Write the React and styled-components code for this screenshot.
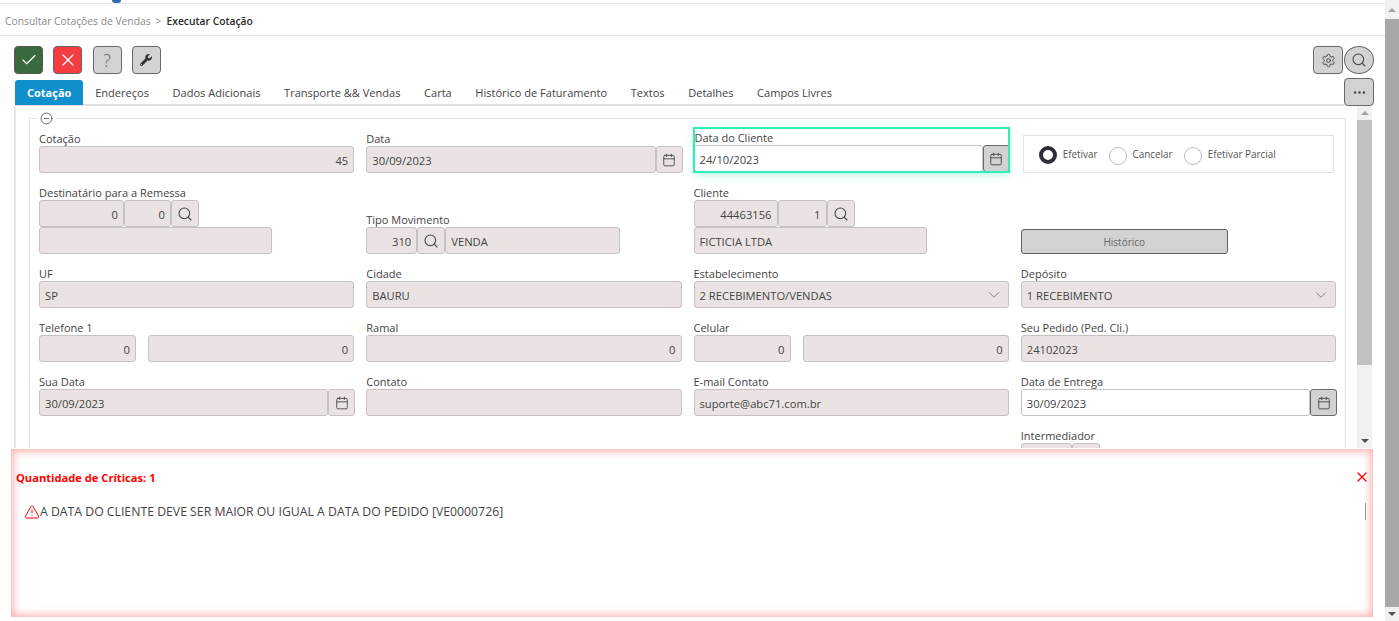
import React from 'react';
import styled, { createGlobalStyle } from 'styled-components';
import { Check, X, Search, Calendar, Settings, MoreHorizontal, ChevronDown, CircleMinus, TriangleAlert } from 'lucide-react';
import { FaWrench } from 'react-icons/fa';

const GlobalStyle = createGlobalStyle`
  html, body { margin: 0; padding: 0; background: #fff; overflow: hidden; }
  * { box-sizing: border-box; }
  body { font-family: "Open Sans", "Noto Sans", sans-serif; font-size: 11px; color: #444; }
`;

const Page = styled.div`
  position: relative;
  display: flex;
  width: 1399px;
  height: 621px;
  overflow: hidden;
`;
const Main = styled.div`
  width: 1385px;
  display: flex;
  flex-direction: column;
`;
const TopStrip = styled.div`
  height: 4px;
  border-bottom: 1px solid #e6e6e6;
  padding-left: 112px;
`;
const LogoBit = styled.span`
  display: block;
  width: 9px;
  height: 3px;
  background: #2f6fb0;
  border-radius: 0 0 5px 5px;
`;
const Breadcrumb = styled.div`
  height: 32px;
  border-bottom: 1px solid #e2e2e2;
  display: flex;
  align-items: center;
  gap: 5px;
  padding: 2px 0 0 5px;
  font-size: 10.3px;
  color: #8a8a8a;
  b { color: #2b2b2b; font-weight: 600; }
`;
const Toolbar = styled.div`
  display: flex;
  align-items: center;
  gap: 10.3px;
  padding: 10px 11px 0 14px;
  height: 38px;
`;
const ToolButton = styled.button`
  width: 29px;
  height: 28px;
  padding: 0;
  display: flex;
  align-items: center;
  justify-content: center;
  border-radius: 4px;
  border: 1.5px solid ${p => p.$border || '#6b6b6b'};
  background: ${p => p.$bg || '#d2d2d2'};
  color: ${p => p.$color || '#444'};
  font-family: inherit;
  font-size: 18px;
  font-weight: 300;
`;
const RightTools = styled.div`
  margin-left: auto;
  display: flex;
  gap: 1px;
`;
const RoundButton = styled(ToolButton)`
  width: 30px;
  border-radius: 50%;
`;
const WideTool = styled(ToolButton)`
  width: 30px;
`;
const TabRow = styled.div`
  display: flex;
  align-items: flex-end;
  padding: 0 11px 0 15px;
  height: 27px;
  margin-top: 5px;
`;
const TabList = styled.div`
  flex: 1;
  display: flex;
  height: 27px;
  padding-top: 1px;
  border-bottom: 2px solid #e0e0e0;
`;
const Tab = styled.div`
  padding: 0 ${p => (p.$active ? 12 : 11.8)}px;
  height: 25px;
  display: flex;
  align-items: center;
  font-size: ${p => (p.$active ? 11 : 11.05)}px;
  border-radius: 3px 3px 0 0;
  color: ${p => (p.$active ? '#fff' : '#444')};
  background: ${p => (p.$active ? '#0f90cc' : 'transparent')};
  font-weight: ${p => (p.$active ? 700 : 400)};
`;
const Panel = styled.div`
  display: flex;
  height: 342px;
  margin-left: 14px;
  margin-right: 13px;
  border-left: 2px solid #e6e6e6;
  overflow: hidden;
`;
const PanelBody = styled.div`
  flex: 1;
  overflow: hidden;
  padding: 5px 11px 0 13px;
`;
const Group = styled.fieldset`
  margin: 0;
  padding: 0 9px 30px 9px;
  border: 1px solid #e2e2e2;
  border-bottom: 0;
  min-width: 0;
`;
const GroupToggle = styled.legend`
  margin-left: -2px;
  padding: 0 3px;
  height: 14px;
  display: flex;
  align-items: center;
  color: #444;
`;
const FormGrid = styled.div`
  display: grid;
  grid-template-columns: repeat(4, 1fr);
  column-gap: 12px;
  row-gap: 13px;
  align-items: end;
  padding-top: 3px;
`;
const Field = styled.div`
  display: flex;
  flex-direction: column;
  min-width: 0;
  ${p => p.$focused && `
    outline: 2px solid #2cf0b4;
    outline-offset: -1px;
    padding-top: 3px;
    margin-bottom: 1px;
    box-shadow: 0 3px 8px rgba(44, 240, 180, 0.35);
  `}
`;
const Label = styled.label`
  height: 14px;
  line-height: 14px;
  font-size: 11px;
  color: #444;
  white-space: nowrap;
  padding-left: ${p => (p.$inset ? 1 : 0)}px;
`;
const InputRow = styled.div`
  display: flex;
  gap: ${p => p.$gap || 0}px;
`;
const Input = styled.div`
  height: 27px;
  flex: ${p => (p.$w ? `0 0 ${p.$w}px` : '1 1 auto')};
  min-width: 0;
  display: flex;
  align-items: center;
  justify-content: ${p => (p.$right ? 'flex-end' : 'space-between')};
  padding: 1px 5px 0 5px;
  background: ${p => (p.$editable ? '#fff' : '#ebe3e3')};
  border: 1.5px solid #c6c2c2;
  border-radius: 3px;
  font-size: 11.2px;
  color: #444;
  white-space: nowrap;
`;
const SearchButton = styled.div`
  flex: 0 0 28px;
  height: 27px;
  display: flex;
  align-items: center;
  justify-content: center;
  background: #ebe3e3;
  border: 1.5px solid #c6c2c2;
  border-radius: 3px;
  color: #444;
`;
const DateButton = styled.div`
  flex: 0 0 27px;
  height: 27px;
  margin-right: -1px;
  display: flex;
  align-items: center;
  justify-content: center;
  border-radius: 3px;
  color: #444;
  background: ${p => (p.$active ? '#d2d2d2' : '#ebe3e3')};
  border: 1.5px solid ${p => (p.$active ? '#6b6b6b' : '#c6c2c2')};
`;
const RadioBox = styled.div`
  height: 38px;
  margin: 0 2px;
  display: flex;
  align-items: center;
  gap: 11px;
  padding: 2px 15px 0 15px;
  border: 1px solid #e4e4e4;
  font-size: 9.9px;
  color: #555;
`;
const RadioItem = styled.div`
  display: flex;
  align-items: center;
  gap: 6px;
  span { margin-top: -3px; }
`;
const RadioDot = styled.i`
  display: block;
  width: 18px;
  height: 18px;
  border-radius: 50%;
  border: ${p => (p.$on ? '4px solid #2e2e34' : '1px solid #bdbdbd')};
  margin-top: ${p => (p.$on ? 0 : 1)}px;
`;
const HistoryButton = styled.button`
  width: 207px;
  height: 25px;
  background: #d2d2d2;
  border: 1.5px solid #5f5f5f;
  border-radius: 3px;
  font-family: inherit;
  font-size: 10px;
  color: #666;
`;
const Scrollbar = styled.div`
  flex: 0 0 ${p => p.$w}px;
  display: flex;
  flex-direction: column;
  align-items: center;
  background: #f1f1f1;
`;
const Thumb = styled.div`
  width: 100%;
  background: ${p => p.$color};
  height: ${p => p.$h}px;
`;
const Arrow = styled.div`
  flex: 0 0 ${p => p.$h}px;
  display: flex;
  align-items: center;
  justify-content: center;
  &::before {
    content: '';
    border-left: 4px solid transparent;
    border-right: 4px solid transparent;
    ${p => (p.$down ? 'border-top: 4px solid #505050;' : 'border-bottom: 4px solid #a3a3a3;')}
  }
`;
const Spacer = styled.div`
  flex: 1;
`;
const Alert = styled.div`
  position: absolute;
  left: 11px;
  top: 449px;
  width: 1362px;
  height: 168px;
  background: #fff;
  box-shadow: inset 0 0 9px 2px rgba(255, 70, 70, 0.45);
  padding: 21px 5px 0 5px;
`;
const AlertHead = styled.div`
  display: flex;
  align-items: center;
  justify-content: space-between;
  height: 14px;
  font-size: 11.15px;
  font-weight: 700;
  color: #f00;
  svg { margin-right: -2px; }
`;
const AlertMessage = styled.div`
  display: flex;
  align-items: center;
  height: 17px;
  margin-top: 19px;
  padding: 0 2px 0 8px;
  font-size: 12.25px;
  color: #444;
`;
const AlertCursor = styled.span`
  margin-left: auto;
  width: 1px;
  height: 17px;
  background: #999;
`;

const Calendari = () => <Calendar size={14} strokeWidth={1.5} />;
const Lupa = () => <Search size={16} strokeWidth={1.6} />;

function DateInput({ value, editable, active }) {
  return (
    <InputRow>
      <Input $editable={editable}>{value}</Input>
      <DateButton $active={active}><Calendari /></DateButton>
    </InputRow>
  );
}

function SelectInput({ value }) {
  return (
    <Input>
      {value}
      <ChevronDown size={18} strokeWidth={1.2} color="#777" />
    </Input>
  );
}

const tabs = ['Cotação', 'Endereços', 'Dados Adicionais', 'Transporte && Vendas', 'Carta', 'Histórico de Faturamento', 'Textos', 'Detalhes', 'Campos Livres'];

export default function App() {
  return (
    <Page>
      <GlobalStyle />
      <Main>
        <TopStrip><LogoBit /></TopStrip>
        <Breadcrumb>
          <span>Consultar Cotações de Vendas</span>
          <span>&gt;</span>
          <b>Executar Cotação</b>
        </Breadcrumb>
        <Toolbar>
          <ToolButton $bg="#3a6b3f" $border="#555" $color="#fff"><Check size={18} strokeWidth={1.5} /></ToolButton>
          <ToolButton $bg="#f53c3e" $border="#666" $color="#fff"><X size={20} strokeWidth={1.5} /></ToolButton>
          <ToolButton $color="#666">?</ToolButton>
          <ToolButton><FaWrench size={12} color="#333" /></ToolButton>
          <RightTools>
            <WideTool><Settings size={15} strokeWidth={1.5} /></WideTool>
            <RoundButton><Lupa /></RoundButton>
          </RightTools>
        </Toolbar>
        <TabRow>
          <TabList>
            {tabs.map((t, i) => <Tab key={t} $active={i === 0}>{t}</Tab>)}
          </TabList>
          <WideTool><MoreHorizontal size={15} /></WideTool>
        </TabRow>
        <Panel>
          <PanelBody>
            <Group>
              <GroupToggle><CircleMinus size={13} strokeWidth={1.4} /></GroupToggle>
              <FormGrid>
                <Field>
                  <Label>Cotação</Label>
                  <Input $right>45</Input>
                </Field>
                <Field>
                  <Label>Data</Label>
                  <DateInput value="30/09/2023" />
                </Field>
                <Field $focused>
                  <Label $inset>Data do Cliente</Label>
                  <DateInput value="24/10/2023" editable active />
                </Field>
                <RadioBox>
                  <RadioItem><RadioDot $on /><span>Efetivar</span></RadioItem>
                  <RadioItem><RadioDot /><span>Cancelar</span></RadioItem>
                  <RadioItem><RadioDot /><span>Efetivar Parcial</span></RadioItem>
                </RadioBox>

                <Field>
                  <Label>Destinatário para a Remessa</Label>
                  <InputRow>
                    <Input $right $w={85}>0</Input>
                    <Input $right $w={47}>0</Input>
                    <SearchButton><Lupa /></SearchButton>
                  </InputRow>
                  <InputRow>
                    <Input $w={233} />
                  </InputRow>
                </Field>
                <Field>
                  <Label>Tipo Movimento</Label>
                  <InputRow>
                    <Input $right $w={51}>310</Input>
                    <SearchButton><Lupa /></SearchButton>
                    <Input $w={175}>VENDA</Input>
                  </InputRow>
                </Field>
                <Field>
                  <Label>Cliente</Label>
                  <InputRow>
                    <Input $right $w={84}>44463156</Input>
                    <Input $right $w={49}>1</Input>
                    <SearchButton><Lupa /></SearchButton>
                  </InputRow>
                  <InputRow>
                    <Input $w={233}>FICTICIA LTDA</Input>
                  </InputRow>
                </Field>
                <HistoryButton>Histórico</HistoryButton>

                <Field>
                  <Label>UF</Label>
                  <Input>SP</Input>
                </Field>
                <Field>
                  <Label>Cidade</Label>
                  <Input>BAURU</Input>
                </Field>
                <Field>
                  <Label>Estabelecimento</Label>
                  <SelectInput value="2 RECEBIMENTO/VENDAS" />
                </Field>
                <Field>
                  <Label>Depósito</Label>
                  <SelectInput value="1 RECEBIMENTO" />
                </Field>

                <Field>
                  <Label>Telefone 1</Label>
                  <InputRow $gap={12}>
                    <Input $right $w={97}>0</Input>
                    <Input $right>0</Input>
                  </InputRow>
                </Field>
                <Field>
                  <Label>Ramal</Label>
                  <Input $right>0</Input>
                </Field>
                <Field>
                  <Label>Celular</Label>
                  <InputRow $gap={12}>
                    <Input $right $w={97}>0</Input>
                    <Input $right>0</Input>
                  </InputRow>
                </Field>
                <Field>
                  <Label>Seu Pedido (Ped. Cli.)</Label>
                  <Input>24102023</Input>
                </Field>

                <Field>
                  <Label>Sua Data</Label>
                  <DateInput value="30/09/2023" />
                </Field>
                <Field>
                  <Label>Contato</Label>
                  <Input />
                </Field>
                <Field>
                  <Label>E-mail Contato</Label>
                  <Input>suporte@abc71.com.br</Input>
                </Field>
                <Field>
                  <Label>Data de Entrega</Label>
                  <DateInput value="30/09/2023" editable active />
                </Field>

                <span />
                <span />
                <span />
                <Field>
                  <Label>Intermediador</Label>
                  <InputRow>
                    <Input $w={51} />
                    <SearchButton />
                  </InputRow>
                </Field>
              </FormGrid>
            </Group>
          </PanelBody>
          <Scrollbar $w={15}>
            <Arrow $h={14} />
            <Thumb $color="#c1c1c1" $h={245} />
            <Spacer />
            <Arrow $h={14} $down />
          </Scrollbar>
        </Panel>
      </Main>
      <Scrollbar $w={14}>
        <Arrow $h={19} />
        <Thumb $color="#a8a8a8" $h={588} />
        <Spacer />
        <Arrow $h={14} $down />
      </Scrollbar>
      <Alert>
        <AlertHead>
          <span>Quantidade de Críticas: 1</span>
          <X size={16} strokeWidth={1.8} />
        </AlertHead>
        <AlertMessage>
          <TriangleAlert size={16} strokeWidth={1.5} color="#f00" />
          A DATA DO CLIENTE DEVE SER MAIOR OU IGUAL A DATA DO PEDIDO [VE0000726]
          <AlertCursor />
        </AlertMessage>
      </Alert>
    </Page>
  );
}
